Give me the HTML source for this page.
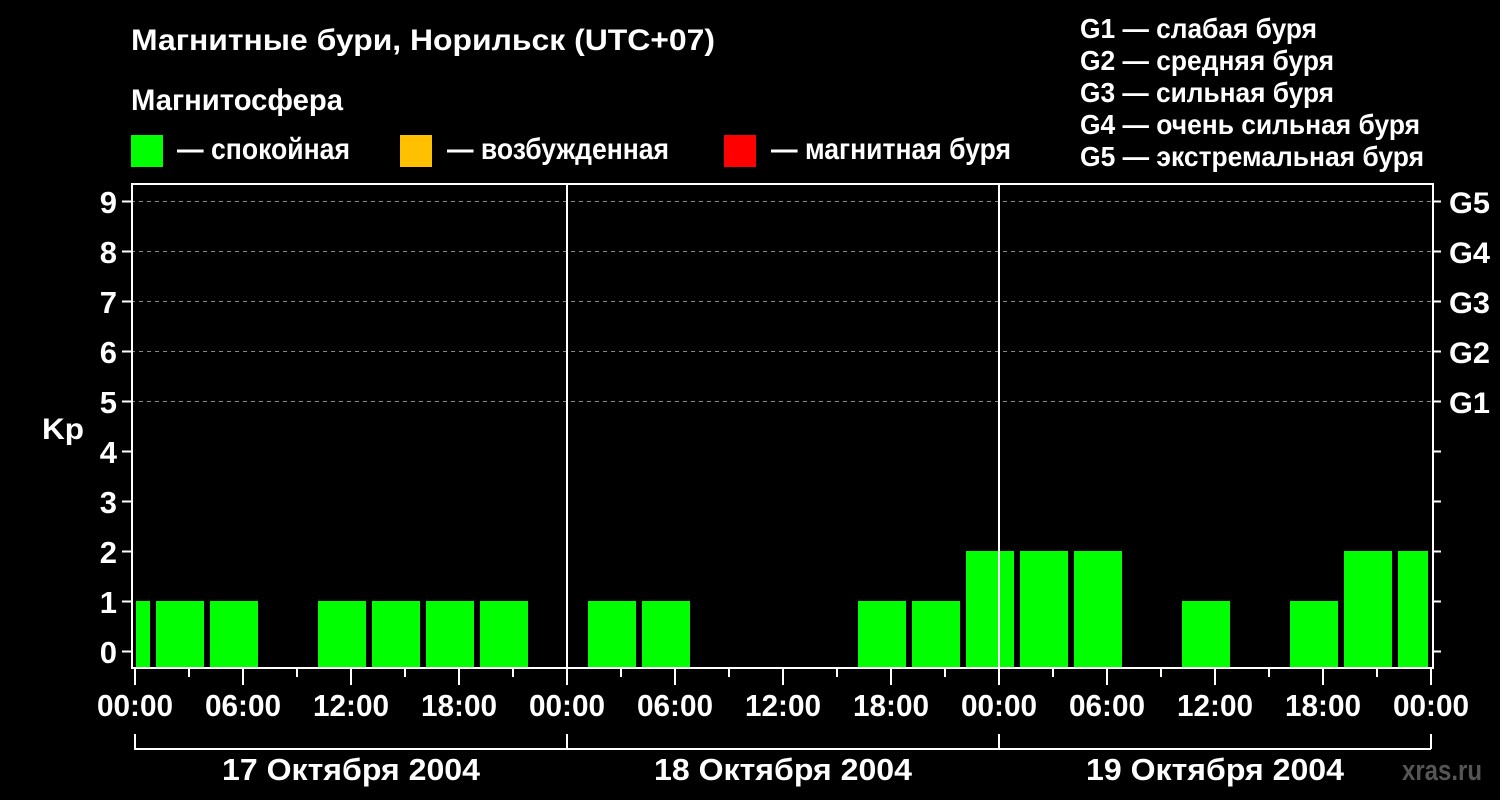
<!DOCTYPE html>
<html><head><meta charset="utf-8"><style>
html,body{margin:0;padding:0;background:#000;width:1500px;height:800px;overflow:hidden}
svg{display:block}
text{font-family:"Liberation Sans",sans-serif;font-weight:bold;fill:#fff}
</style></head><body>
<svg width="1500" height="800" xmlns="http://www.w3.org/2000/svg">
<text x="131" y="50" font-size="30" textLength="584" lengthAdjust="spacingAndGlyphs">Магнитные бури, Норильск (UTC+07)</text>
<text x="131" y="110" font-size="30" textLength="212" lengthAdjust="spacingAndGlyphs">Магнитосфера</text>
<rect x="131" y="135" width="32" height="32" fill="#00ff00"/>
<text x="177" y="159" font-size="30" textLength="173" lengthAdjust="spacingAndGlyphs">— спокойная</text>
<rect x="400" y="135" width="32" height="32" fill="#ffc000"/>
<text x="447" y="159" font-size="30" textLength="222" lengthAdjust="spacingAndGlyphs">— возбужденная</text>
<rect x="724" y="135" width="32" height="32" fill="#ff0000"/>
<text x="771" y="159" font-size="30" textLength="240" lengthAdjust="spacingAndGlyphs">— магнитная буря</text>
<g font-size="28">
<text x="1080" y="38" textLength="237" lengthAdjust="spacingAndGlyphs">G1 — слабая буря</text>
<text x="1080" y="70" textLength="254" lengthAdjust="spacingAndGlyphs">G2 — средняя буря</text>
<text x="1080" y="102" textLength="254" lengthAdjust="spacingAndGlyphs">G3 — сильная буря</text>
<text x="1080" y="134" textLength="340" lengthAdjust="spacingAndGlyphs">G4 — очень сильная буря</text>
<text x="1080" y="166" textLength="344" lengthAdjust="spacingAndGlyphs">G5 — экстремальная буря</text>
</g>
<g stroke="#888" stroke-dasharray="4,4" stroke-width="1">
<line x1="131" y1="201.5" x2="1433" y2="201.5"/>
<line x1="131" y1="251.5" x2="1433" y2="251.5"/>
<line x1="131" y1="301.5" x2="1433" y2="301.5"/>
<line x1="131" y1="351.5" x2="1433" y2="351.5"/>
<line x1="131" y1="401.5" x2="1433" y2="401.5"/>
</g>
<g fill="#00ff00">
<rect x="136" y="601" width="14" height="67"/>
<rect x="156" y="601" width="48" height="67"/>
<rect x="210" y="601" width="48" height="67"/>
<rect x="318" y="601" width="48" height="67"/>
<rect x="372" y="601" width="48" height="67"/>
<rect x="426" y="601" width="48" height="67"/>
<rect x="480" y="601" width="48" height="67"/>
<rect x="588" y="601" width="48" height="67"/>
<rect x="642" y="601" width="48" height="67"/>
<rect x="858" y="601" width="48" height="67"/>
<rect x="912" y="601" width="48" height="67"/>
<rect x="966" y="551" width="48" height="117"/>
<rect x="1020" y="551" width="48" height="117"/>
<rect x="1074" y="551" width="48" height="117"/>
<rect x="1182" y="601" width="48" height="67"/>
<rect x="1290" y="601" width="48" height="67"/>
<rect x="1344" y="551" width="48" height="117"/>
<rect x="1398" y="551" width="30" height="117"/>
</g>
<g stroke="#fff" stroke-width="2" fill="none">
<rect x="132" y="184" width="1301" height="484"/>
<line x1="567" y1="184" x2="567" y2="668"/>
<line x1="999" y1="184" x2="999" y2="668"/>
<path d="M122 201.5H132M122 251.5H132M122 301.5H132M122 351.5H132M122 401.5H132M122 451.5H132M122 501.5H132M122 551.5H132M122 601.5H132M122 651.5H132"/>
<path d="M1433 201.5H1441M1433 251.5H1441M1433 301.5H1441M1433 351.5H1441M1433 401.5H1441M1433 451.5H1441M1433 501.5H1441M1433 551.5H1441M1433 601.5H1441M1433 651.5H1441"/>
<path d="M135 668V685M243 668V685M351 668V685M459 668V685M567 668V685M675 668V685M783 668V685M891 668V685M999 668V685M1107 668V685M1215 668V685M1323 668V685M1431 668V685"/>
<path d="M189 668V677M297 668V677M405 668V677M513 668V677M621 668V677M729 668V677M837 668V677M945 668V677M1053 668V677M1161 668V677M1269 668V677M1377 668V677"/>
<path d="M135 734V749H1431M1431 734V749M567 734V749M999 734V749"/>
</g>
<g font-size="31" text-anchor="end">
<text x="117" y="213">9</text><text x="117" y="263">8</text><text x="117" y="313">7</text><text x="117" y="363">6</text><text x="117" y="413">5</text><text x="117" y="463">4</text><text x="117" y="513">3</text><text x="117" y="563">2</text><text x="117" y="613">1</text><text x="117" y="663">0</text>
</g>
<text x="42" y="439" font-size="30" textLength="42" lengthAdjust="spacingAndGlyphs">Kp</text>
<g font-size="30">
<text x="1449" y="213" textLength="41" lengthAdjust="spacingAndGlyphs">G5</text><text x="1449" y="263" textLength="41" lengthAdjust="spacingAndGlyphs">G4</text><text x="1449" y="313" textLength="41" lengthAdjust="spacingAndGlyphs">G3</text><text x="1449" y="363" textLength="41" lengthAdjust="spacingAndGlyphs">G2</text><text x="1449" y="413" textLength="41" lengthAdjust="spacingAndGlyphs">G1</text>
</g>
<g font-size="31" text-anchor="middle">
<text x="135" y="716" textLength="76" lengthAdjust="spacingAndGlyphs">00:00</text><text x="243" y="716" textLength="76" lengthAdjust="spacingAndGlyphs">06:00</text><text x="351" y="716" textLength="76" lengthAdjust="spacingAndGlyphs">12:00</text><text x="459" y="716" textLength="76" lengthAdjust="spacingAndGlyphs">18:00</text>
<text x="567" y="716" textLength="76" lengthAdjust="spacingAndGlyphs">00:00</text><text x="675" y="716" textLength="76" lengthAdjust="spacingAndGlyphs">06:00</text><text x="783" y="716" textLength="76" lengthAdjust="spacingAndGlyphs">12:00</text><text x="891" y="716" textLength="76" lengthAdjust="spacingAndGlyphs">18:00</text>
<text x="999" y="716" textLength="76" lengthAdjust="spacingAndGlyphs">00:00</text><text x="1107" y="716" textLength="76" lengthAdjust="spacingAndGlyphs">06:00</text><text x="1215" y="716" textLength="76" lengthAdjust="spacingAndGlyphs">12:00</text><text x="1323" y="716" textLength="76" lengthAdjust="spacingAndGlyphs">18:00</text><text x="1431" y="716" textLength="76" lengthAdjust="spacingAndGlyphs">00:00</text>
<text x="351" y="780" textLength="258" lengthAdjust="spacingAndGlyphs">17 Октября 2004</text>
<text x="783" y="780" textLength="258" lengthAdjust="spacingAndGlyphs">18 Октября 2004</text>
<text x="1215" y="780" textLength="258" lengthAdjust="spacingAndGlyphs">19 Октября 2004</text>
</g>
<text x="1402" y="780" font-size="29" textLength="80" lengthAdjust="spacingAndGlyphs" style="fill:#555">xras.ru</text>
</svg>
</body></html>
